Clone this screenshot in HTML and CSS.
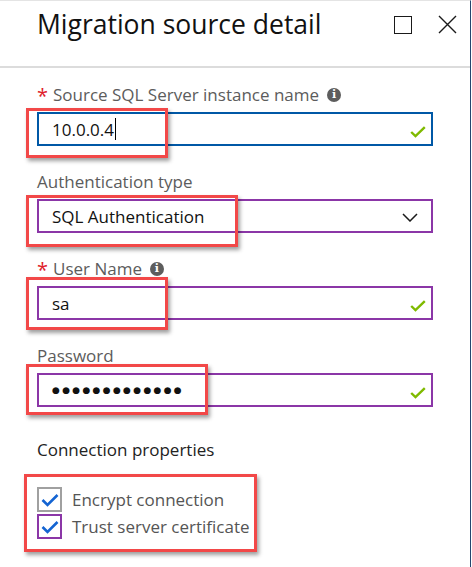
FILE: index.html
```html
<!DOCTYPE html>
<html>
<head>
<meta charset="utf-8">
<link rel="stylesheet" href="styles.css">
</head>
<body>
<div class="panel">
  <div class="header">
    <h1 class="title">Migration source detail</h1>
    <div class="header-actions">
      <span class="icon-max"></span>
      <svg class="icon-close" width="19" height="19" viewBox="0 0 19 19"><path d="M1 1 L18 18 M18 1 L1 18" stroke="#1a1a1a" stroke-width="1.4" fill="none"/></svg>
    </div>
  </div>
  <div class="form">
    <div class="field">
      <div class="label"><span class="req">*</span>Source SQL Server instance name<span class="info">i</span></div>
      <div class="input input-focus">
        <span class="value">10.0.0.4</span><span class="caret"></span>
        <svg class="ok" width="16" height="12" viewBox="0 0 16 12"><path d="M1.2 6 L5.5 10.2 L14.8 1.2" stroke="#7fba00" stroke-width="2.4" fill="none"/></svg>
        <div class="mark mark-1"></div>
      </div>
    </div>
    <div class="field">
      <div class="label">Authentication type</div>
      <div class="input input-purple">
        <span class="value">SQL Authentication</span>
        <svg class="chev" width="16" height="9" viewBox="0 0 16 9"><path d="M1 1 L8 8 L15 1" stroke="#1a1a1a" stroke-width="1.5" fill="none"/></svg>
        <div class="mark mark-2"></div>
      </div>
    </div>
    <div class="field">
      <div class="label"><span class="req">*</span>User Name<span class="info">i</span></div>
      <div class="input input-purple">
        <span class="value">sa</span>
        <svg class="ok" width="16" height="12" viewBox="0 0 16 12"><path d="M1.2 6 L5.5 10.2 L14.8 1.2" stroke="#7fba00" stroke-width="2.4" fill="none"/></svg>
        <div class="mark mark-3"></div>
      </div>
    </div>
    <div class="field">
      <div class="label">Password</div>
      <div class="input input-purple">
        <span class="value dots">●●●●●●●●●●●●●</span>
        <svg class="ok" width="16" height="12" viewBox="0 0 16 12"><path d="M1.2 6 L5.5 10.2 L14.8 1.2" stroke="#7fba00" stroke-width="2.4" fill="none"/></svg>
        <div class="mark mark-4"></div>
      </div>
    </div>
    <div class="section-title">Connection properties</div>
    <div class="checks">
      <div class="check-row">
        <span class="box box-gray"><svg width="18" height="14" viewBox="0 0 18 14"><path d="M1.5 7 L6.5 12 L16.5 2" stroke="#1464d2" stroke-width="2.6" fill="none"/></svg></span>
        <span class="check-label">Encrypt connection</span>
      </div>
      <div class="check-row">
        <span class="box box-purple"><svg width="18" height="14" viewBox="0 0 18 14"><path d="M1.5 7 L6.5 12 L16.5 2" stroke="#1464d2" stroke-width="2.6" fill="none"/></svg></span>
        <span class="check-label">Trust server certificate</span>
      </div>
      <div class="mark mark-5"></div>
    </div>
  </div>
</div>
</body>
</html>
```
FILE: styles.css
```css
* { box-sizing: border-box; }
html, body { margin: 0; padding: 0; background: #fff; }
body {
  width: 472px;
  height: 567px;
  overflow: hidden;
  font-family: "Open Sans", "Noto Sans", sans-serif;
}
.panel {
  width: 471px;
  height: 567px;
  border-right: 1px solid #24466f;
  border-top: 1px solid #e4e4e4;
}
.header {
  height: 67px;
  border-bottom: 2px solid #dcdcdc;
  display: flex;
  align-items: flex-start;
  justify-content: space-between;
  padding: 0 13px 0 37px;
}
.title {
  margin: 0;
  padding-top: 5px;
  font-size: 26.5px;
  font-weight: 400;
  color: #111;
  line-height: 36px;
}
.header-actions {
  display: flex;
  align-items: center;
  gap: 26px;
  padding-top: 14px;
}
.icon-max {
  width: 18px;
  height: 18px;
  border: 1.5px solid #1a1a1a;
}
.form {
  padding: 16px 0 0 37px;
}
.field {
  margin-bottom: 25px;
}
.label {
  font-size: 17px;
  line-height: 22px;
  color: #5c5c5c;
  display: flex;
  align-items: center;
  height: 22px;
  margin-bottom: 6px;
}
.req {
  color: #e0202a;
  font-size: 20px;
  width: 16px;
  margin-top: 2px;
  line-height: 22px;
  height: 22px;
}
.info {
  width: 14px;
  height: 14px;
  border-radius: 50%;
  background: #5d5d5d;
  color: #fff;
  font-size: 11px;
  font-weight: 700;
  line-height: 14px;
  text-align: center;
  margin-left: 8px;
  font-family: "DejaVu Serif", serif;
}
.input {
  position: relative;
  width: 396px;
  height: 34px;
  border: 2px solid #8b36a7;
  display: flex;
  align-items: center;
  padding: 0 0 0 13px;
}
.input-focus { border-color: #0058a6; }
.value {
  font-size: 17px;
  color: #111;
}
.caret {
  width: 1px;
  height: 22px;
  background: #000;
  margin-left: 1px;
}
.dots {
  font-family: "DejaVu Sans", sans-serif;
  font-size: 9px;
  letter-spacing: 2.3px;
}
.ok {
  position: absolute;
  right: 5px;
  top: 12px;
}
.chev {
  position: absolute;
  right: 13px;
  top: 12px;
}
.mark {
  position: absolute;
  border: 3px solid #f24848;
  box-shadow: 2px 3px 4px rgba(0,0,0,0.38);
  left: -13px;
  pointer-events: none;
}
.mark-1 { top: -6px; width: 142px; height: 50px; }
.mark-2 { top: -6px; width: 212px; height: 52px; }
.mark-3 { top: -11px; width: 142px; height: 53px; }
.mark-4 { top: -11px; width: 182px; height: 51px; }
.section-title {
  font-size: 17px;
  color: #222;
  line-height: 22px;
  margin-top: 32px;
}
.checks {
  position: relative;
  margin-top: 26px;
  width: 220px;
}
.mark-5 { top: -13px; width: 233px; height: 78px; }
.check-row {
  display: flex;
  align-items: center;
  gap: 10px;
  height: 25px;
  margin-bottom: 2px;
}
.box {
  width: 25px;
  height: 25px;
  border: 2px solid #a0a0a0;
  display: flex;
  align-items: center;
  justify-content: center;
}
.box-purple { border-color: #8b36a7; }
.box svg { margin-top: 1px; }
.check-label {
  font-size: 17px;
  color: #555;
}
```
